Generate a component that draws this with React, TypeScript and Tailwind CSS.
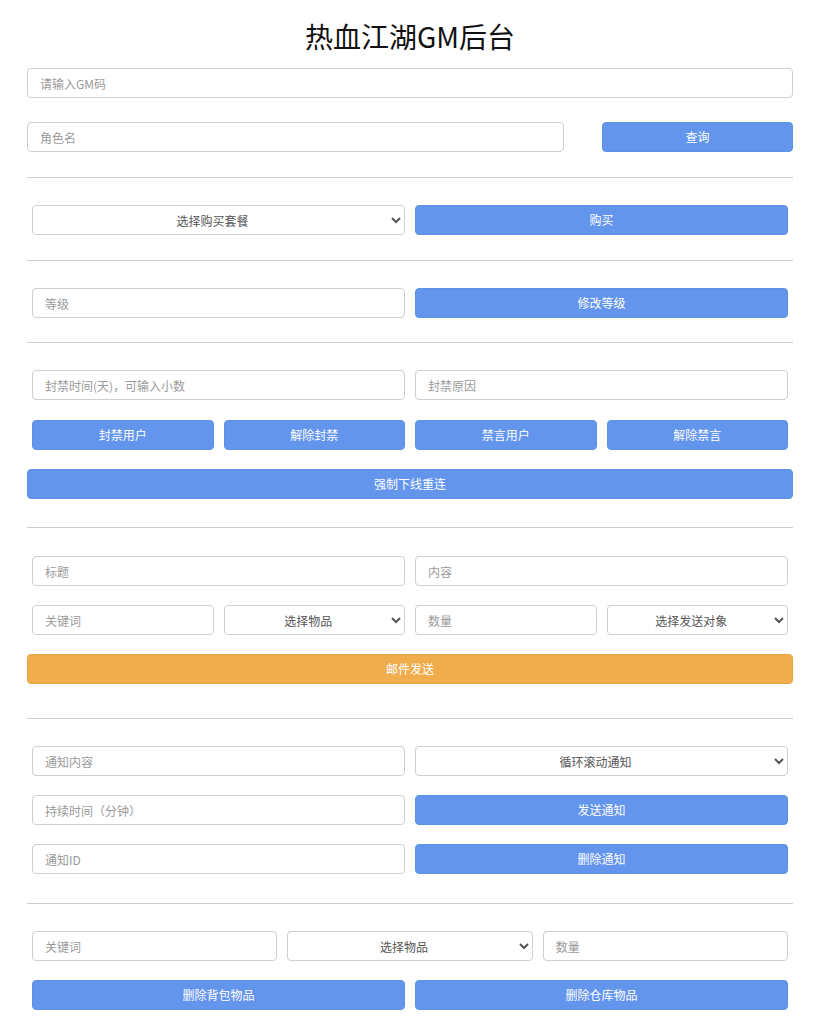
import type { ReactNode } from 'react'

const FONT = "font-['Noto_Sans_CJK_SC','Noto_Sans',sans-serif]"

function Field({ placeholder }: { placeholder: string }) {
  return (
    <input
      type="text"
      placeholder={placeholder}
      className="h-[30px] w-full min-w-0 rounded-[4px] border border-[#cfcfcf] bg-white px-3 text-[12px] text-[#333] placeholder:text-[#9a9a9a] outline-none"
    />
  )
}

function Choice({ label }: { label: string }) {
  return (
    <select
      defaultValue=""
      className="h-[30px] w-full min-w-0 rounded-[4px] border border-[#cfcfcf] bg-white px-2 text-[12px] text-[#555] [text-align-last:center] outline-none"
    >
      <option value="">{label}</option>
    </select>
  )
}

function Btn({ children, warn }: { children: ReactNode; warn?: boolean }) {
  return (
    <button
      type="button"
      className={`h-[30px] w-full rounded-[4px] border text-[12px] text-white ${
        warn ? 'border-[#e9a444] bg-[#f0ad4e]' : 'border-[#5a93e3] bg-[#6495ed]'
      }`}
    >
      {children}
    </button>
  )
}

function Hr({ top, bottom }: { top: number; bottom: number }) {
  return (
    <div
      className="h-0 border-t border-[#cccccc]"
      style={{ marginTop: top, marginBottom: bottom }}
    />
  )
}

export default function App() {
  return (
    <div className={`min-h-screen bg-white px-[27px] ${FONT}`}>
      <h1 className="pt-[18px] pb-[14px] text-center text-[28px] leading-[36px] font-normal text-[#111]">
        热血江湖GM后台
      </h1>

      <Field placeholder="请输入GM码" />

      <div className="mt-[24px] flex">
        <div className="flex-1">
          <Field placeholder="角色名" />
        </div>
        <div className="ml-[38px] w-[191px]">
          <Btn>查询</Btn>
        </div>
      </div>

      <Hr top={25} bottom={27} />

      {/* 购买套餐 */}
      <div className="grid grid-cols-2 gap-[10px] px-[5px]">
        <Choice label="选择购买套餐" />
        <Btn>购买</Btn>
      </div>

      <Hr top={25} bottom={27} />

      {/* 等级 */}
      <div className="grid grid-cols-2 gap-[10px] px-[5px]">
        <Field placeholder="等级" />
        <Btn>修改等级</Btn>
      </div>

      <Hr top={24} bottom={27} />

      {/* 封禁 */}
      <div className="flex flex-col gap-[20px] px-[5px]">
        <div className="grid grid-cols-2 gap-[10px]">
          <Field placeholder="封禁时间(天)，可输入小数" />
          <Field placeholder="封禁原因" />
        </div>
        <div className="grid grid-cols-4 gap-[10px]">
          <Btn>封禁用户</Btn>
          <Btn>解除封禁</Btn>
          <Btn>禁言用户</Btn>
          <Btn>解除禁言</Btn>
        </div>
      </div>
      <div className="mt-[19px]">
        <Btn>强制下线重连</Btn>
      </div>

      <Hr top={28} bottom={28} />

      {/* 邮件 */}
      <div className="flex flex-col gap-[19px] px-[5px]">
        <div className="grid grid-cols-2 gap-[10px]">
          <Field placeholder="标题" />
          <Field placeholder="内容" />
        </div>
        <div className="grid grid-cols-4 gap-[10px]">
          <Field placeholder="关键词" />
          <Choice label="选择物品" />
          <Field placeholder="数量" />
          <Choice label="选择发送对象" />
        </div>
      </div>
      <div className="mt-[19px]">
        <Btn warn>邮件发送</Btn>
      </div>

      <Hr top={34} bottom={27} />

      {/* 通知 */}
      <div className="grid grid-cols-2 gap-x-[10px] gap-y-[19px] px-[5px]">
        <Field placeholder="通知内容" />
        <Choice label="循环滚动通知" />
        <Field placeholder="持续时间（分钟）" />
        <Btn>发送通知</Btn>
        <Field placeholder="通知ID" />
        <Btn>删除通知</Btn>
      </div>

      <Hr top={29} bottom={27} />

      {/* 物品删除 */}
      <div className="flex flex-col gap-[19px] px-[5px] pb-[14px]">
        <div className="grid grid-cols-3 gap-[10px]">
          <Field placeholder="关键词" />
          <Choice label="选择物品" />
          <Field placeholder="数量" />
        </div>
        <div className="grid grid-cols-2 gap-[10px]">
          <Btn>删除背包物品</Btn>
          <Btn>删除仓库物品</Btn>
        </div>
      </div>
    </div>
  )
}
